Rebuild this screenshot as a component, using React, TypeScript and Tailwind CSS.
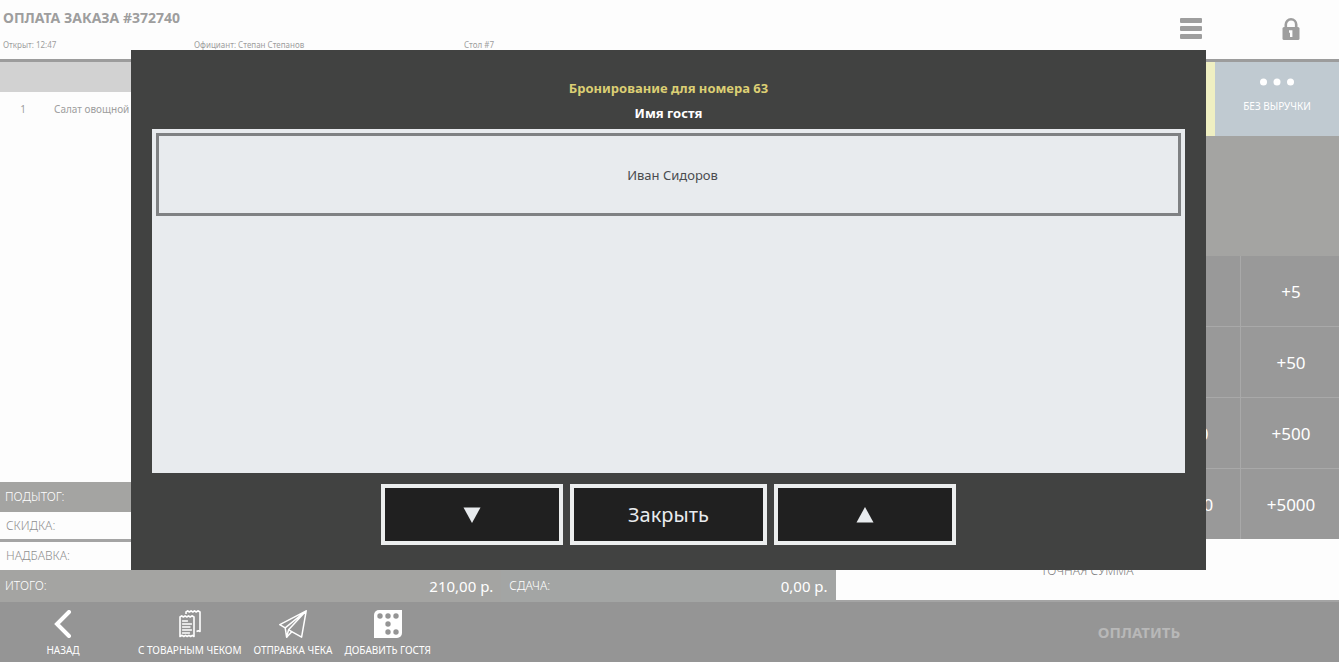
import type { ReactNode } from "react";

function MenuIcon() {
  return (
    <svg width="22" height="22" viewBox="0 0 22 22" fill="currentColor" aria-hidden="true">
      <rect y="0" width="22" height="5" rx="1" />
      <rect y="8" width="22" height="5" rx="1" />
      <rect y="16" width="22" height="5" rx="1" />
    </svg>
  );
}

function LockIcon() {
  return (
    <svg width="18" height="22" viewBox="0 0 18 22" fill="none" aria-hidden="true">
      <path d="M3.8 10V6.500a5.200 5.200 0 0 1 10.400 0V10" stroke="currentColor" strokeWidth="2.600" />
      <rect x="0.500" y="9" width="17" height="13" rx="1.500" fill="currentColor" />
      <path d="M7 12.300h3.400V19H8v-4.300H7z" fill="#fdfdfd" />
    </svg>
  );
}

function BackIcon() {
  return (
    <svg width="28" height="28" viewBox="0 0 28 28" fill="none" stroke="currentColor" strokeWidth="4" aria-hidden="true">
      <path d="M20 2 8 14l12 12" strokeLinecap="round" strokeLinejoin="miter" />
    </svg>
  );
}

function ReceiptIcon() {
  return (
    <svg width="22" height="28" viewBox="0 0 22 28" fill="none" stroke="currentColor" strokeWidth="1.6" strokeLinejoin="round" aria-hidden="true">
      <path d="M1 7l1.7-1.2L4.4 7l1.7-1.2L7.8 7l1.7-1.2L11.2 7l1.7-1.2L15 7v19.5l-1.7-1.2-1.7 1.2-1.7-1.2-1.7 1.2-1.7-1.2-1.7 1.2-1.7-1.2L1 26.5z" />
      <path d="M7 4V2l1.7-1.200L10.400 2l1.700-1.200L13.800 2l1.700-1.200L17.200 2l1.700-1.200L21 2v19.500l-1.700-.8-1.800.8" />
      <path d="M3.500 11h5M3.500 14h9M3.500 17h7.500M3.500 20h9M3.500 23h7" strokeLinecap="round" strokeWidth="1.300" />
    </svg>
  );
}

function PlaneIcon() {
  return (
    <svg width="28" height="28" viewBox="0 0 28 28" fill="none" stroke="currentColor" strokeWidth="1.5" strokeLinejoin="round" aria-hidden="true">
      <path d="M27.200.8.8 14.600l5.400 3.200zM27.200.8 6.200 17.800l1.400 9.400 2-7.400zM27.200.8 9.600 19.800l13 7.400z" />
      <path d="M7.600 27.200l5.400-5.600" />
    </svg>
  );
}

function GuestCardIcon() {
  const holes = [[6, 6], [14, 6], [22, 6], [14, 14], [14, 22], [22, 22]];
  return (
    <svg width="28" height="28" viewBox="0 0 28 28" aria-hidden="true">
      <path d="M5 0h23v23a5 5 0 0 1-5 5H0V5a5 5 0 0 1 5-5z" fill="currentColor" />
      {holes.map(([cx, cy]) => (
        <circle key={`${cx}-${cy}`} cx={cx} cy={cy} r="2.7" fill="#959595" />
      ))}
    </svg>
  );
}

function Triangle({ up = false }: { up?: boolean }) {
  return (
    <svg width="18" height="16" viewBox="0 0 18 16" fill="#e8ebee" aria-hidden="true">
      <path d={up ? "M9 0l8.500 15.500H.5z" : "M9 16L.5.500h17z"} />
    </svg>
  );
}

function Header() {
  return (
    <header className="flex h-[62px] shrink-0 justify-between border-b-[3px] border-[#9c9c9c] text-[#9e9e9e]">
      <div className="flex flex-1 flex-col justify-between pt-2 pb-2 pl-[3px]">
        <h1 className="text-[14px] leading-5 font-bold">ОПЛАТА ЗАКАЗА #372740</h1>
        <div className="flex text-[8px] leading-3">
          <span className="w-[191px]">Открыт: 12:47</span>
          <span className="w-[270px]">Официант: Степан Степанов</span>
          <span>Стол #7</span>
        </div>
      </div>
      <div className="flex items-center gap-20 pr-[39px] pb-0.5">
        <button type="button" aria-label="Меню"><MenuIcon /></button>
        <button type="button" aria-label="Блокировка"><LockIcon /></button>
      </div>
    </header>
  );
}

function OrderPanel() {
  return (
    <section className="flex w-[62.4%] flex-col">
      <div className="h-[30px] bg-[#d2d2d2]" />
      <div className="flex flex-1 items-start pt-[9px] text-[10px] leading-4 text-[#9e9e9e]">
        <span className="w-[46px] text-center">1</span>
        <span className="pl-2">Салат овощной</span>
      </div>
      <div className="text-[12px] font-light">
        <div className="flex h-[30px] items-center bg-[#a4a4a2] px-[5px] text-white">ПОДЫТОГ:</div>
        <div className="flex h-[30px] items-center border-b-[3px] border-[#a4a4a4] px-1.5 text-[#8f8f8f]">СКИДКА:</div>
        <div className="flex h-[28px] items-center px-1.5 text-[#8f8f8f]">НАДБАВКА:</div>
      </div>
      <div className="flex h-8 text-white">
        <TotalCell label="ИТОГО:" value="210,00 р." className="w-[60%] bg-[#a4a4a2] pl-[5px]" />
        <TotalCell label="СДАЧА:" value="0,00 р." className="w-[40%] bg-[#a3a5a4] pl-2" />
      </div>
    </section>
  );
}

function TotalCell({ label, value, className }: { label: string; value: string; className: string }) {
  return (
    <div className={`flex items-center justify-between pr-2 ${className}`}>
      <span className="text-[12px] font-light">{label}</span>
      <span className="text-[15px]">{value}</span>
    </div>
  );
}

const bills = [
  { small: "", large: "+5" },
  { small: "", large: "+50" },
  { small: "+100", large: "+500" },
  { small: "+1000", large: "+5000" },
];

function PaymentPanel() {
  return (
    <section className="flex flex-1 flex-col">
      <div className="flex h-[74px]">
        <div className="flex-1 bg-[#efefc2]" />
        <button type="button" className="flex w-[124px] flex-col items-center gap-3 bg-[#c0cad1] pt-4 text-white">
          <svg width="34" height="8" viewBox="0 0 34 8" fill="currentColor" aria-hidden="true">
            <circle cx="3.500" cy="4" r="3.500" />
            <circle cx="17" cy="4" r="3.500" />
            <circle cx="30.500" cy="4" r="3.500" />
          </svg>
          <span className="text-[10px] leading-4">БЕЗ ВЫРУЧКИ</span>
        </button>
      </div>
      <div className="h-[120px] bg-[#a4a4a2]" />
      <div className="flex flex-1 flex-col gap-px bg-[#a9a9a9]">
        {bills.map(({ small, large }) => (
          <div key={large} className="flex flex-1 gap-px text-[17px] text-white">
            <div className="flex-1 bg-[#999999]" />
            <button type="button" className="w-[102px] bg-[#999999] pt-0.5">{small}</button>
            <button type="button" className="w-[98px] bg-[#999999] pt-0.5 pl-0.5">{large}</button>
          </div>
        ))}
      </div>
      <button type="button" className="h-[61px] pt-0.5 text-[12px] font-light text-[#808080]">ТОЧНАЯ СУММА</button>
      <div className="h-0.5 bg-[#a4a4a4]" />
    </section>
  );
}

function ActionButton({ icon, label, className = "" }: { icon: ReactNode; label: string; className?: string }) {
  return (
    <button type="button" className={`flex flex-col items-center gap-1 whitespace-nowrap ${className}`}>
      {icon}
      <span className="text-[10px] leading-4">{label}</span>
    </button>
  );
}

function Footer() {
  return (
    <footer className="flex h-[60px] shrink-0 items-center justify-between bg-[#959595] text-white">
      <div className="flex gap-3 pt-1">
        <ActionButton icon={<BackIcon />} label="НАЗАД" className="w-[126px]" />
        <ActionButton icon={<ReceiptIcon />} label="С ТОВАРНЫМ ЧЕКОМ" />
        <ActionButton icon={<PlaneIcon />} label="ОТПРАВКА ЧЕКА" />
        <ActionButton icon={<GuestCardIcon />} label="ДОБАВИТЬ ГОСТЯ" />
      </div>
      <button type="button" disabled className="w-[400px] text-[15px] font-bold text-[#b8b8b8]">
        ОПЛАТИТЬ
      </button>
    </footer>
  );
}

function BookingDialog() {
  const button = "flex h-[61px] items-center justify-center border-4 border-[#eceeee] bg-[#202020] text-[#e8ebee]";
  return (
    <div className="absolute inset-0 flex pt-[50px] pr-[133px] pb-[92px] pl-[131px]">
      <div
        role="dialog"
        aria-labelledby="booking-title"
        className="flex flex-1 flex-col bg-[#414241] px-[21px] pt-[26px] pb-[25px]"
      >
        <h2 id="booking-title" className="text-center text-[13px] leading-[25px] font-bold text-[#dccf74]">
          Бронирование для номера 63
        </h2>
        <p className="text-center text-[13px] leading-[25px] font-bold text-white">Имя гостя</p>
        <div className="mt-[3px] flex-1 bg-[#e8ebee] p-1">
          <button type="button" className="h-[83px] w-full border-[3px] border-[#7f8183] pt-0.5 pl-2 text-[13px] text-[#4a4c4e]">
            Иван Сидоров
          </button>
        </div>
        <div className="mt-[11px] flex justify-center gap-[7px]">
          <button type="button" aria-label="Вниз" className={`w-[182px] ${button}`}><Triangle /></button>
          <button type="button" className={`w-[197px] text-[20px] ${button}`}>Закрыть</button>
          <button type="button" aria-label="Вверх" className={`w-[182px] ${button}`}><Triangle up /></button>
        </div>
      </div>
    </div>
  );
}

export default function App() {
  return (
    <div className="relative flex min-h-screen flex-col bg-[#fdfdfd] font-['Noto_Sans','Open_Sans',sans-serif]">
      <Header />
      <main className="flex flex-1">
        <OrderPanel />
        <PaymentPanel />
      </main>
      <Footer />
      <BookingDialog />
    </div>
  );
}
